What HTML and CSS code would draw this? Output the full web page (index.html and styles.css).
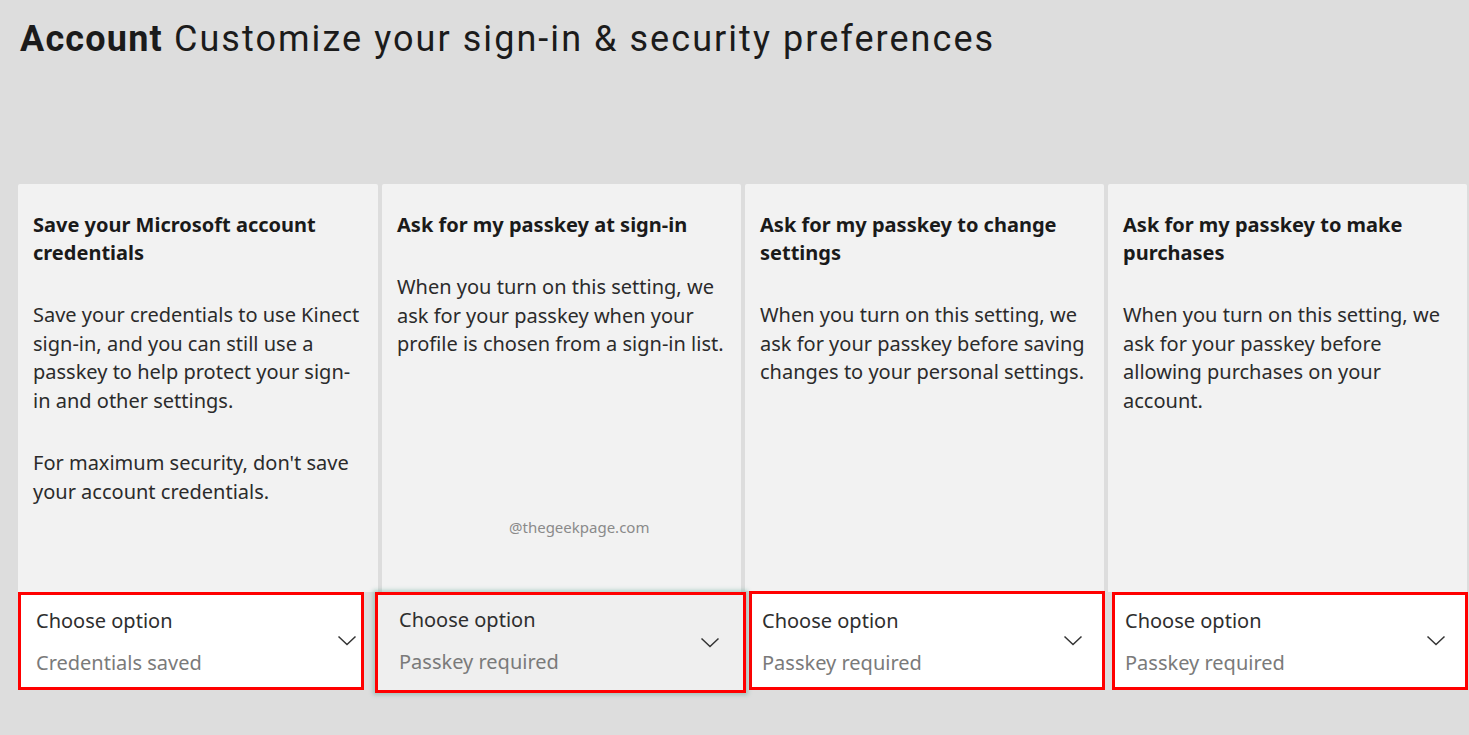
FILE: index.html
```html
<!DOCTYPE html>
<html lang="en">
<head>
<meta charset="utf-8">
<title>Account</title>
<link rel="stylesheet" href="styles.css">
</head>
<body>
<div class="page">
  <h1 class="header"><span class="header-strong">Account</span> Customize your sign-in &amp; security preferences</h1>
  <div class="cards">
    <section class="card card-1">
      <div class="card-body">
        <h2 class="card-title">Save your Microsoft account credentials</h2>
        <p class="card-text">Save your credentials to use Kinect sign-in, and you can still use a passkey to help protect your sign-in and other settings.</p>
        <p class="card-text">For maximum security, don't save your account credentials.</p>
      </div>
      <div class="dropdown">
        <div class="dd-texts">
          <div class="dd-label">Choose option</div>
          <div class="dd-value">Credentials saved</div>
        </div>
        <svg class="chev" width="20" height="12" viewBox="0 0 20 12"><path d="M1.5 1.5 L10 9.5 L18.5 1.5" fill="none" stroke="#333" stroke-width="1.5"/></svg>
      </div>
    </section>
    <section class="card card-2">
      <div class="card-body">
        <h2 class="card-title">Ask for my passkey at sign-in</h2>
        <p class="card-text">When you turn on this setting, we ask for your passkey when your profile is chosen from a sign-in list.</p>
      </div>
      <div class="dropdown">
        <div class="dd-texts">
          <div class="dd-label">Choose option</div>
          <div class="dd-value">Passkey required</div>
        </div>
        <svg class="chev" width="20" height="12" viewBox="0 0 20 12"><path d="M1.5 1.5 L10 9.5 L18.5 1.5" fill="none" stroke="#333" stroke-width="1.5"/></svg>
      </div>
    </section>
    <section class="card card-3">
      <div class="card-body">
        <h2 class="card-title">Ask for my passkey to change settings</h2>
        <p class="card-text">When you turn on this setting, we ask for your passkey before saving changes to your personal settings.</p>
      </div>
      <div class="dropdown">
        <div class="dd-texts">
          <div class="dd-label">Choose option</div>
          <div class="dd-value">Passkey required</div>
        </div>
        <svg class="chev" width="20" height="12" viewBox="0 0 20 12"><path d="M1.5 1.5 L10 9.5 L18.5 1.5" fill="none" stroke="#333" stroke-width="1.5"/></svg>
      </div>
    </section>
    <section class="card card-4">
      <div class="card-body">
        <h2 class="card-title">Ask for my passkey to make purchases</h2>
        <p class="card-text">When you turn on this setting, we ask for your passkey before allowing purchases on your account.</p>
      </div>
      <div class="dropdown">
        <div class="dd-texts">
          <div class="dd-label">Choose option</div>
          <div class="dd-value">Passkey required</div>
        </div>
        <svg class="chev" width="20" height="12" viewBox="0 0 20 12"><path d="M1.5 1.5 L10 9.5 L18.5 1.5" fill="none" stroke="#333" stroke-width="1.5"/></svg>
      </div>
    </section>
  </div>
  <div class="watermark">@thegeekpage.com</div>
</div>
</body>
</html>
```
FILE: styles.css
```css
html, body {
  margin: 0;
  padding: 0;
  background: #dddddd;
  overflow: hidden;
}
.page {
  position: relative;
  width: 1469px;
  height: 735px;
  padding: 0 0 0 18px;
  box-sizing: border-box;
  font-family: "Noto Sans", "Open Sans", sans-serif;
}
.header {
  margin: 0;
  padding: 17px 0 0 2px;
  height: 184px;
  box-sizing: border-box;
  font-family: Roboto, "Liberation Sans", sans-serif;
  font-weight: 400;
  font-size: 36px;
  line-height: 44px;
  letter-spacing: 2.05px;
  color: #1b1b1b;
  white-space: nowrap;
}
.header-strong {
  font-weight: 700;
  letter-spacing: 1.2px;
}
.cards {
  display: flex;
  gap: 4px;
  width: 1500px;
}
.card {
  width: 359px;
  height: 506px;
  flex: none;
  display: flex;
  flex-direction: column;
}
.card-1 { width: 360px; }
.card-body {
  flex: 1;
  background: #f2f2f2;
  padding: 27px 12px 0 15px;
  border-radius: 2px 2px 0 0;
}
.card-title {
  margin: 0 0 34px;
  font-size: 20px;
  line-height: 28px;
  font-weight: 700;
  color: #1a1a1a;
}
.card-text {
  margin: 0 0 34px;
  font-size: 20px;
  line-height: 28.5px;
  color: #2b2b2b;
}
.dropdown {
  height: 98px;
  flex: none;
  box-sizing: border-box;
  border: 3px solid #ff0000;
  background: #ffffff;
  display: flex;
  align-items: center;
  justify-content: space-between;
  padding: 0 0 0 15px;
}
.dd-texts {
  display: flex;
  flex-direction: column;
  gap: 14px;
  padding-top: 2px;
}
.dd-label {
  font-size: 20px;
  line-height: 28px;
  color: #2e2e2e;
}
.dd-value {
  font-size: 20px;
  line-height: 28px;
  color: #7a7a7a;
}
.chev {
  flex: none;
}
.card-1 .dropdown {
  margin-right: 14px;
  padding-right: 4px;
}
.card-2 .dropdown {
  margin: 0 -5px -3px -7px;
  height: 101px;
  padding-left: 21px;
  padding-right: 23px;
  background: #efefef;
  box-shadow: 0 0 4px 2px rgba(60, 150, 130, 0.35);
  position: relative;
  z-index: 1;
}
.card-2 .dd-texts {
  padding-top: 0;
  padding-bottom: 4px;
}
.card-3 .dropdown {
  margin: 0 -1px 0 4px;
  padding-left: 10px;
  padding-right: 19px;
  height: 99px;
}
.card-4 .dropdown {
  margin: 0 0 0 4px;
  padding-left: 10px;
  padding-right: 19px;
  width: 356px;
}
.watermark {
  position: absolute;
  left: 509px;
  top: 516px;
  font-family: "Noto Sans", "Open Sans", sans-serif;
  font-size: 15px;
  line-height: 22px;
  color: #8a8a8a;
}
```
